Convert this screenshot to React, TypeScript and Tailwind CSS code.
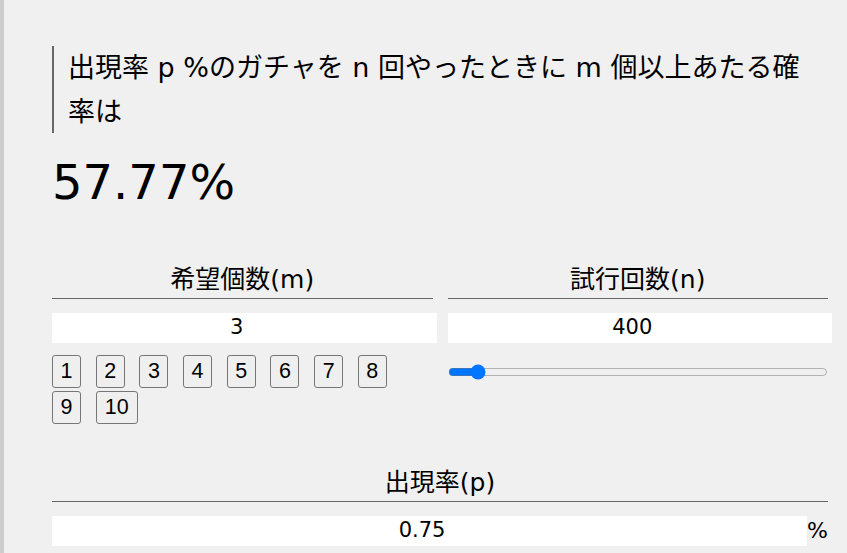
import React from "react";

const FONT = { fontFamily: '"DejaVu Sans", "Noto Sans CJK JP", sans-serif' };

export default function App() {
  const nums = [1, 2, 3, 4, 5, 6, 7, 8, 9, 10];
  return (
    <div
      className="min-h-[553px] bg-[#f0f0f0] border-l-4 border-[#cccccc] pl-[48px] pr-[19px] pt-[46px] text-black"
      style={FONT}
    >
      <blockquote className="border-l-2 border-[#666666] pl-[14px] mr-[16px] text-[27px] leading-[43.5px]">
        出現率 p %のガチャを n 回やったときに m 個以上あたる確率は
      </blockquote>

      <div className="mt-[15px] text-[48px] leading-[68px]">57.77%</div>

      <div className="mt-[46px] grid grid-cols-2 gap-x-[15px]">
        <div>
          <div className="text-center text-[25px] leading-[36px] border-b border-[#666666]">
            希望個数(m)
          </div>
          <input
            type="number"
            defaultValue={3}
            className="mt-[14px] block w-full box-content px-[2px] h-[30px] border-0 bg-white text-center text-[21px] outline-none"
            style={FONT}
          />
          <div className="mt-[12px] mr-[12px] flex flex-wrap gap-x-[14.7px] gap-y-[3px]">
            {nums.map((n) => (
              <button
                key={n}
                className={
                  (n === 10 ? "w-[42px]" : "w-[29px]") +
                  " h-[33px] border border-[#767676] rounded-[3px] bg-[#efefef] text-[21.5px] leading-none p-0 text-black"
                }
                style={{ fontFamily: '"Liberation Sans", Arial, sans-serif' }}
              >
                {n}
              </button>
            ))}
          </div>
        </div>
        <div>
          <div className="text-center text-[25px] leading-[36px] border-b border-[#666666]">
            試行回数(n)
          </div>
          <input
            type="number"
            defaultValue={400}
            className="mt-[14px] block w-full box-content px-[2px] h-[30px] border-0 bg-white text-center text-[21px] outline-none"
            style={FONT}
          />
          <input
            type="range"
            min={1}
            max={6600}
            defaultValue={400}
            className="mt-[21px] block w-full h-4 m-0"
          />
        </div>
      </div>

      <div className="mt-[41px]">
        <div className="text-center text-[25px] leading-[36px] border-b border-[#666666]">
          出現率(p)
        </div>
        <div className="mt-[14px] flex items-center">
          <input
            type="number"
            defaultValue={0.75}
            className="block w-[752px] box-content px-[2px] h-[30px] border-0 bg-white text-center text-[21px] outline-none"
            style={FONT}
          />
          <span className="text-[22px] leading-[30px]">%</span>
        </div>
      </div>
    </div>
  );
}
